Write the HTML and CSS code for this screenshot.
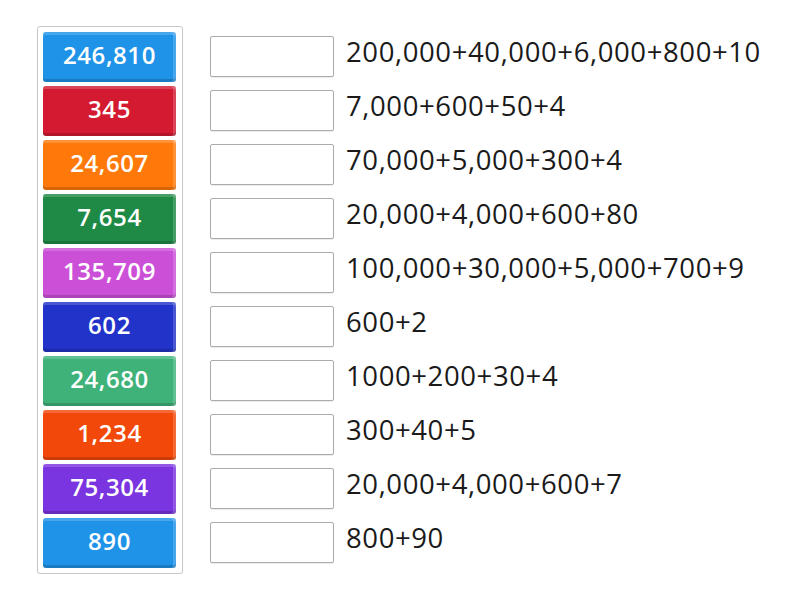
FILE: index.html
```html
<!DOCTYPE html>
<html>
<head>
<meta charset="utf-8">
<link rel="stylesheet" href="styles.css">
</head>
<body>
<div class="page">
  <div class="tiles">
    <div class="tile c1">246,810</div>
    <div class="tile c2">345</div>
    <div class="tile c3">24,607</div>
    <div class="tile c4">7,654</div>
    <div class="tile c5">135,709</div>
    <div class="tile c6">602</div>
    <div class="tile c7">24,680</div>
    <div class="tile c8">1,234</div>
    <div class="tile c9">75,304</div>
    <div class="tile c10">890</div>
  </div>
  <div class="rows">
    <div class="row"><div class="slot"></div><div class="label">200,000+40,000+6,000+800+10</div></div>
    <div class="row"><div class="slot"></div><div class="label">7,000+600+50+4</div></div>
    <div class="row"><div class="slot"></div><div class="label">70,000+5,000+300+4</div></div>
    <div class="row"><div class="slot"></div><div class="label">20,000+4,000+600+80</div></div>
    <div class="row"><div class="slot"></div><div class="label">100,000+30,000+5,000+700+9</div></div>
    <div class="row"><div class="slot"></div><div class="label">600+2</div></div>
    <div class="row"><div class="slot"></div><div class="label">1000+200+30+4</div></div>
    <div class="row"><div class="slot"></div><div class="label">300+40+5</div></div>
    <div class="row"><div class="slot"></div><div class="label">20,000+4,000+600+7</div></div>
    <div class="row"><div class="slot"></div><div class="label">800+90</div></div>
  </div>
</div>
</body>
</html>
```
FILE: styles.css
```css
html, body {
  margin: 0;
  padding: 0;
  background: #ffffff;
}
.page {
  display: flex;
  align-items: flex-start;
  padding: 26px 0 0 37px;
  font-family: "Open Sans", "Noto Sans", sans-serif;
}
.tiles {
  display: flex;
  flex-direction: column;
  gap: 4px;
  padding: 5px 6px 5px 5px;
  border: 1px solid #c8c8c8;
  border-radius: 3px;
  box-shadow: 0 1px 1px rgba(0,0,0,0.08);
}
.tile {
  width: 133px;
  height: 50px;
  border-radius: 3px;
  color: #ffffff;
  font-weight: 600;
  font-size: 24px;
  letter-spacing: 0.6px;
  display: flex;
  align-items: center;
  justify-content: center;
  padding-bottom: 6px;
  box-sizing: border-box;
  box-shadow: inset 0 3px 0 rgba(255,255,255,0.18), inset -3px 0 0 rgba(255,255,255,0.18), inset 0 -3px 0 rgba(0,0,0,0.16);
}
.c1 { background: #1f93e8; }
.c2 { background: #d41a31; }
.c3 { background: #ff790a; }
.c4 { background: #1f8a46; }
.c5 { background: #cc4fd8; }
.c6 { background: #2233c9; }
.c7 { background: #3fb27a; }
.c8 { background: #f2480a; }
.c9 { background: #7a34e0; }
.c10 { background: #1f93e8; }
.rows {
  display: flex;
  flex-direction: column;
  gap: 4px;
  padding-top: 6px;
  margin-left: 27px;
}
.row {
  height: 50px;
  display: flex;
  align-items: flex-start;
}
.slot {
  width: 124px;
  height: 41px;
  margin-top: 4px;
  box-sizing: border-box;
  border: 1px solid #ababab;
  border-radius: 2px;
  background: #ffffff;
  box-shadow: 0 1px 1px rgba(0,0,0,0.08);
}
.label {
  margin-left: 12px;
  margin-top: 2px;
  font-size: 27.5px;
  letter-spacing: 0.6px;
  line-height: 36px;
  color: #1a1a1a;
}
```
